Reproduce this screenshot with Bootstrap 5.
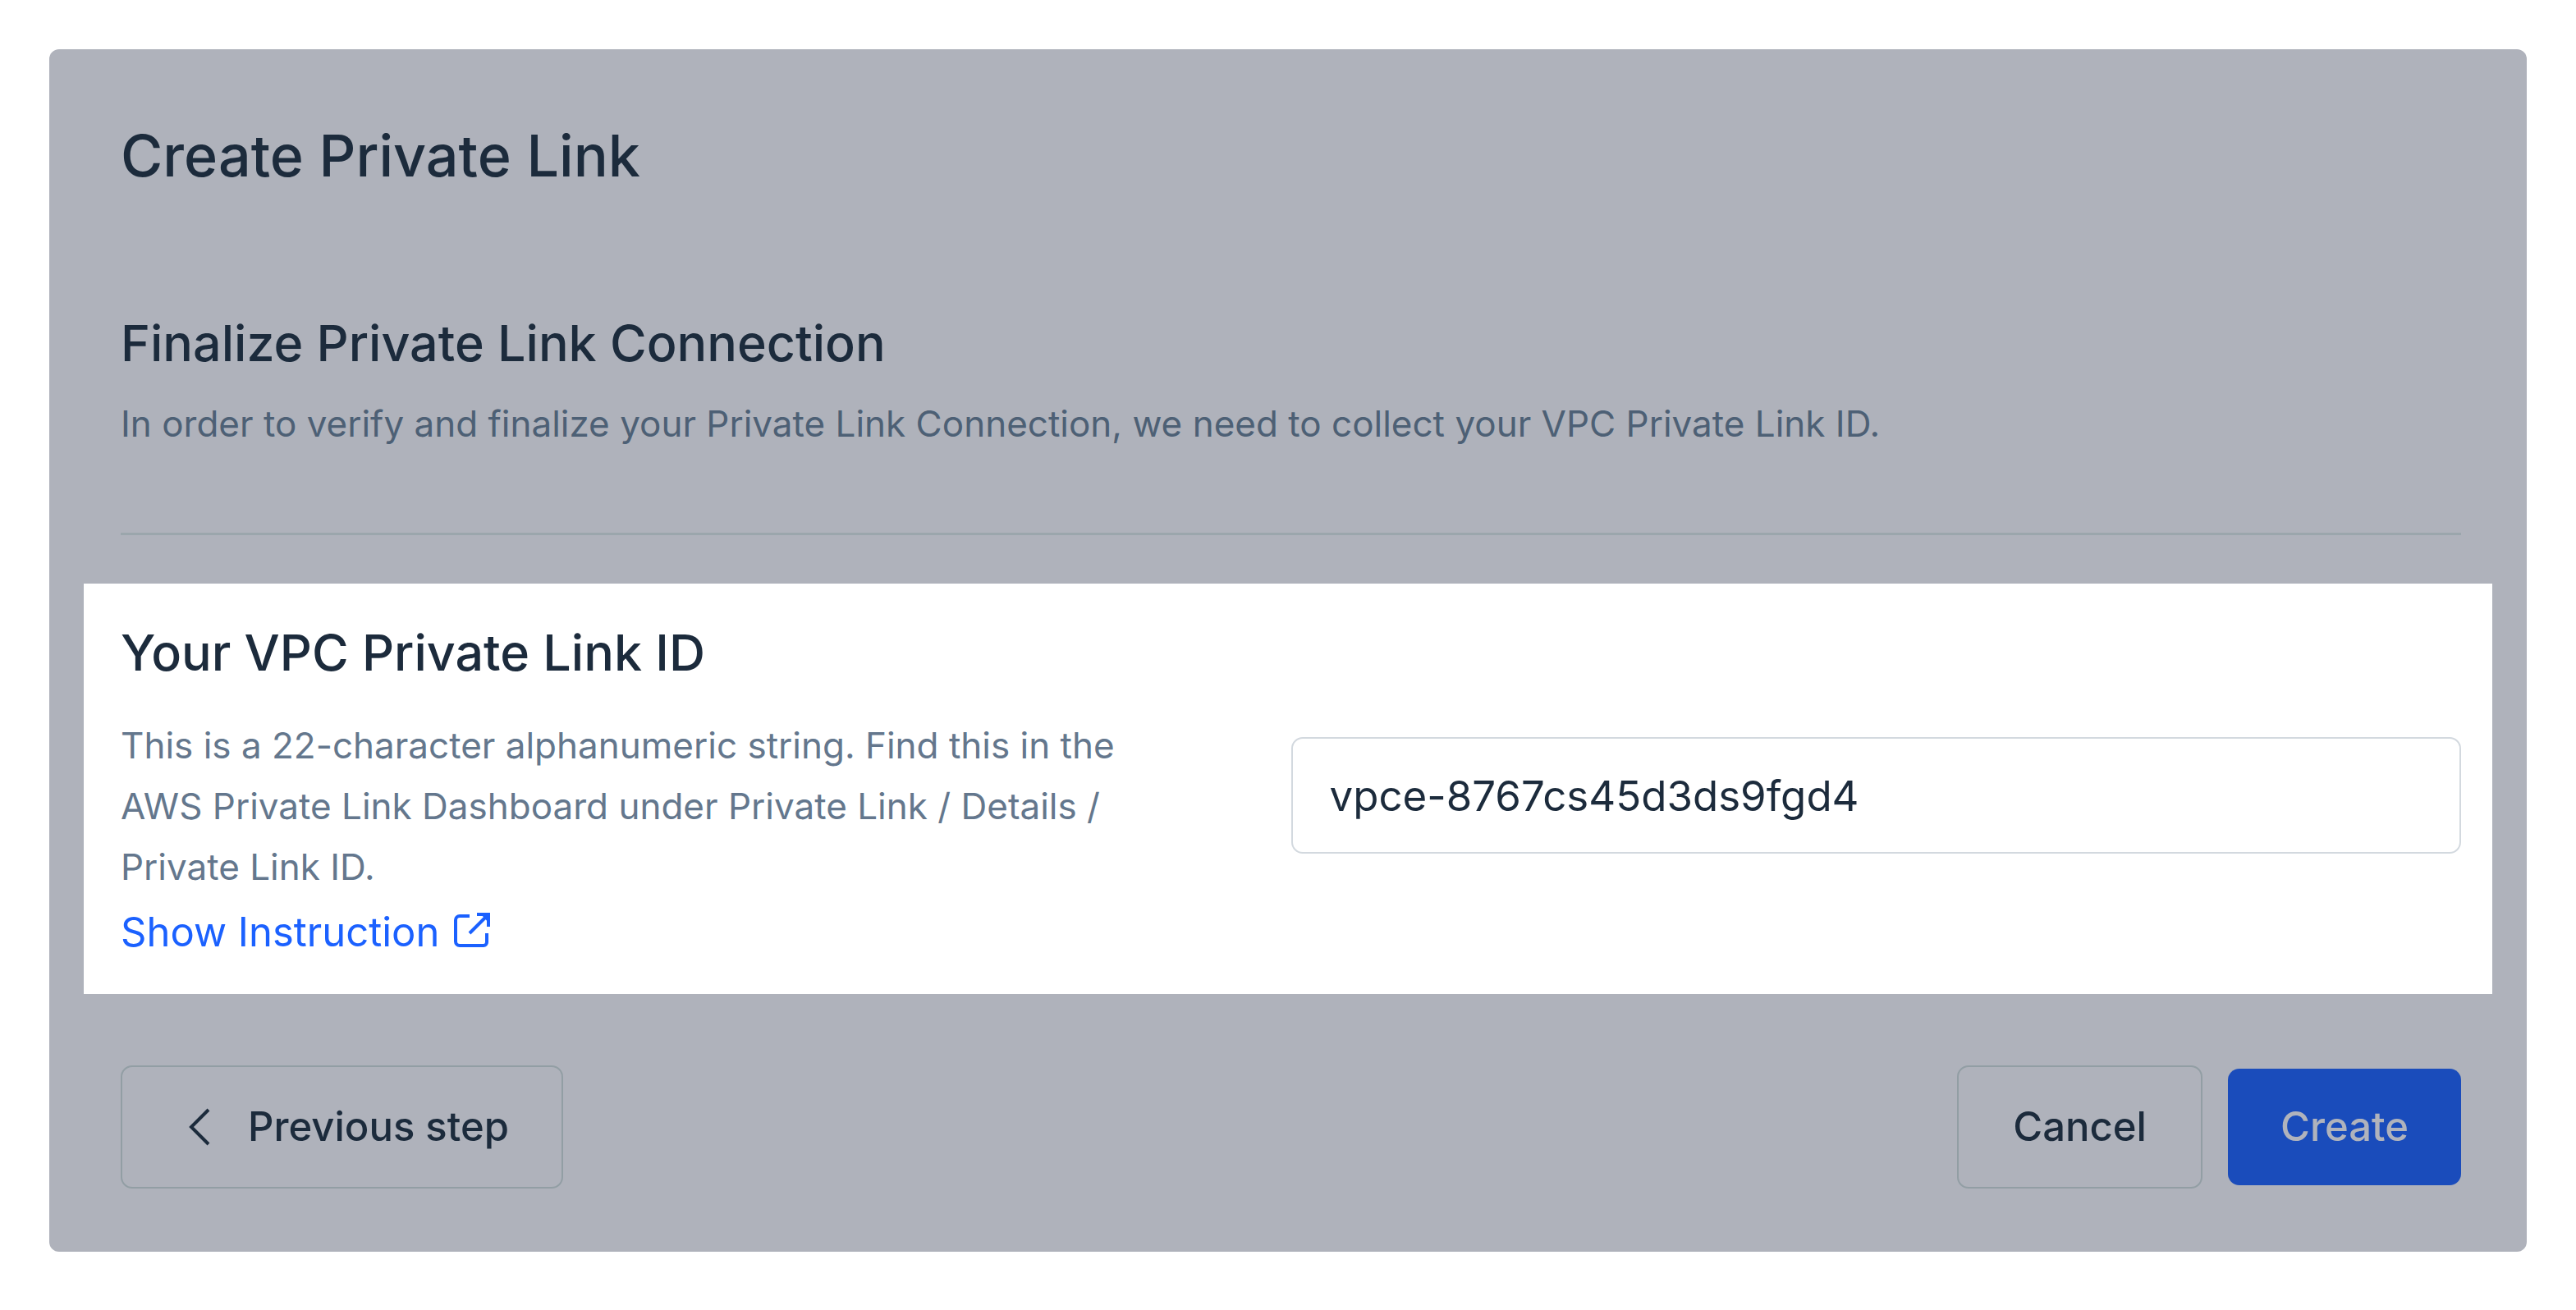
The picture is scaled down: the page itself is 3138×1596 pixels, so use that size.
<!DOCTYPE html>
<html lang="en">
<head>
<meta charset="utf-8">
<meta name="viewport" content="width=device-width, initial-scale=1">
<title>Create Private Link</title>
<link href="https://cdn.jsdelivr.net/npm/bootstrap@5.3.0/dist/css/bootstrap.min.css" rel="stylesheet">
<style>
body { font-family: Inter, "Liberation Sans", sans-serif; color: #1c2b3c; padding: 60px; }
.wizard { background: #afb2bb; border-radius: 12px; padding: 85px 42px 77px; }
.inset { padding-left: 45px; padding-right: 38px; }
.wizard-title { font-size: 70px; line-height: 90px; font-weight: 500; margin: 0 0 146px; }
.step-title { display: block; font-size: 61px; line-height: 74px; font-weight: 500; margin: 0; }
.copy { font-size: 44px; line-height: 74px; margin: 0; color: #64778d; }
.intro .copy { color: #4d6075; margin-top: 24px; }
.rule { border: 0; border-top: 3px solid #9ba6ac; opacity: 1; margin: 96px 0 59px; }
.spotlight { background: #fff; padding-top: 47px; padding-bottom: 38px; }
.spotlight .row { margin-top: 39px; }
.hint { padding-right: 160px; }
.help-link { font-size: 49px; line-height: 74px; margin-top: 6px; gap: 18px; color: #1b61ff; text-decoration: none; }
.help-link svg { margin-bottom: 4px; }
.id-input { font-size: 51px; line-height: 74px; height: 142px; margin-top: 27px; padding: 0 45px; color: #1c2b3c; border: 2px solid #d3d9df; border-radius: 14px; }
.actions { padding-top: 87px; }
.actions .btn { font-size: 49px; line-height: 74px; font-weight: 500; border-radius: 14px; color: #1c2b3c; }
.actions .btn-line { border: 2px solid #929ea4; padding: 36px 66px; }
.actions .btn-back { gap: 43px; padding-left: 80px; padding-right: 64px; }
.actions .btn-go { background: #1a4cbb; color: #b0b3bc; border: 0; padding: 34px 64px; }
.action-gap { gap: 31px; }
</style>
</head>
<body>
<main class="wizard">
  <header class="inset intro">
    <h1 class="wizard-title">Create Private Link</h1>
    <h2 class="step-title">Finalize Private Link Connection</h2>
    <p class="copy">In order to verify and finalize your Private Link Connection, we need to collect your VPC Private Link ID.</p>
    <hr class="rule">
  </header>
  <form>
    <section class="spotlight inset">
      <label class="step-title" for="vpc-id">Your VPC Private Link ID</label>
      <div class="row g-0">
        <div class="col-6 hint">
          <p class="copy">This is a 22-character alphanumeric string. Find this in the AWS Private Link Dashboard under Private Link / Details / Private Link ID.</p>
          <a class="help-link d-inline-flex align-items-center" href="#">Show Instruction
            <svg width="46" height="46" viewBox="0 0 46 46" fill="none" stroke="currentColor" stroke-width="4" aria-hidden="true"><path d="M19 5H7a5 5 0 0 0-5 5v26a5 5 0 0 0 5 5h29a4 4 0 0 0 4-4V26"/><path d="M28 3h14v15M41 4L19 26"/><path d="M33 3h9v10z" fill="currentColor" stroke="none"/></svg>
          </a>
        </div>
        <div class="col-6">
          <input class="form-control id-input" id="vpc-id" type="text" value="vpce-8767cs45d3ds9fgd4">
        </div>
      </div>
    </section>
    <footer class="actions inset d-flex justify-content-between align-items-center">
      <button class="btn btn-line btn-back d-flex align-items-center" type="button">
        <svg width="30" height="48" viewBox="0 0 30 48" fill="none" stroke="currentColor" stroke-width="4" aria-hidden="true"><path d="M25 3L4 24l21 21"/></svg>
        Previous step
      </button>
      <div class="d-flex align-items-center action-gap">
        <button class="btn btn-line" type="button">Cancel</button>
        <button class="btn btn-go" type="submit">Create</button>
      </div>
    </footer>
  </form>
</main>
<script src="https://cdn.jsdelivr.net/npm/bootstrap@5.3.0/dist/js/bootstrap.bundle.min.js"></script>
</body>
</html>
